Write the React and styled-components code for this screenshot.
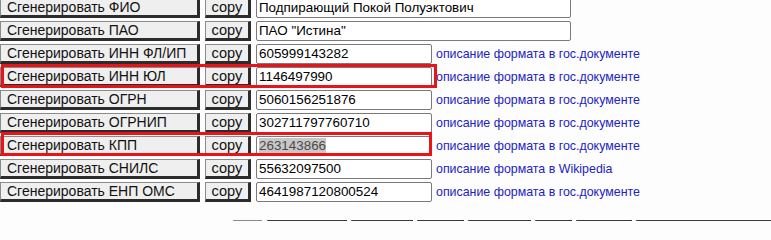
import React from 'react';
import styled, { createGlobalStyle } from 'styled-components';

const GlobalStyle = createGlobalStyle`
	html, body {
		margin: 0;
		overflow: hidden;
		background: #fdfdfd;
	}
	body {
		font-family: "Liberation Sans", Arial, sans-serif;
		font-size: 13.33px;
		color: #000;
	}
`;

const Page = styled.div`
	width: 771px;
	height: 221px;
	overflow: hidden;
`;

const Table = styled.div`
	display: flex;
	flex-direction: column;
	gap: 3px;
	margin-top: -2px;
`;

const Row = styled.div`
	position: relative;
	display: flex;
	align-items: center;
	height: 20px;
`;

const RawButton = styled.button`
	box-sizing: border-box;
	height: 20px;
	margin: 0;
	font-family: "Liberation Sans", Arial, sans-serif;
	font-size: 14px;
	color: #111;
	background: #efefef;
	border-style: solid;
	border-width: 1px 3px 3px 1px;
	border-color: #8a8a8a #2c2c2c #2c2c2c #8a8a8a;
	line-height: 15px;
	white-space: nowrap;
	overflow: hidden;
`;

const GenButton = styled(RawButton)`
	width: 200px;
	padding: 0 0 0 6px;
	text-align: left;
`;

const CopyButton = styled(RawButton)`
	width: 46px;
	margin-left: 5px;
	padding: 0;
	text-align: center;
	font-size: 14.6px;
`;

const Field = styled.div`
	box-sizing: border-box;
	width: ${p => p.$wide ? '315px' : '176px'};
	height: 20px;
	margin-left: 5px;
	padding: 0 2px;
	background: #fff;
	border: 1px solid #7a7a7a;
	border-radius: 2px;
	font-size: 13.4px;
	line-height: 18px;
	white-space: nowrap;
	overflow: hidden;
`;

const Selected = styled.span`
	background: #c8c8c8;
	color: #4a4a4a;
`;

const DocLink = styled.a`
	margin-left: 4px;
	color: #2222c4;
	font-size: 12.4px;
	text-decoration: none;
	white-space: nowrap;
`;

const Marker = styled.div`
	position: absolute;
	left: 1px;
	top: ${p => p.$top}px;
	width: ${p => p.$width}px;
	height: 24px;
	box-sizing: border-box;
	border: 3px solid #e8141a;
	pointer-events: none;
`;

const Footer = styled.div`
	display: flex;
	gap: 4px;
	margin: 18px 0 0 232px;
`;

const PageBox = styled.div`
	box-sizing: border-box;
	flex: none;
	width: 31px;
	height: 20px;
	background: #fff;
	border: 1px solid #8a8a8a;
	border-radius: 2px;
`;

const NavButton = styled(RawButton)`
	flex: none;
	width: ${p => p.$w}px;
	border-top-color: #3a3a3a;
`;

const GOV = 'описание формата в гос.документе';

const rows = [
	{ label: 'ФИО', value: 'Подпирающий Покой Полуэктович', wide: true },
	{ label: 'ПАО', value: 'ПАО "Истина"', wide: true },
	{ label: 'ИНН ФЛ/ИП', value: '605999143282', link: GOV },
	{ label: 'ИНН ЮЛ', value: '1146497990', link: GOV, mark: { top: -3, width: 436 } },
	{ label: 'ОГРН', value: '5060156251876', link: GOV },
	{ label: 'ОГРНИП', value: '302711797760710', link: GOV },
	{ label: 'КПП', value: '263143866', link: GOV, selected: true, mark: { top: -4, width: 431 } },
	{ label: 'СНИЛС', value: '55632097500', link: 'описание формата в Wikipedia' },
	{ label: 'ЕНП ОМС', value: '4641987120800524', link: GOV },
];

const navWidths = [80, 62, 47, 63, 37, 56, 140];

export default function App() {
	return (
		<Page>
			<GlobalStyle />
			<Table>
				{rows.map(row => (
					<Row key={row.label}>
						<GenButton>Сгенерировать {row.label}</GenButton>
						<CopyButton>copy</CopyButton>
						<Field $wide={row.wide}>
							{row.selected ? <Selected>{row.value}</Selected> : row.value}
						</Field>
						{row.link && <DocLink href="#">{row.link}</DocLink>}
						{row.mark && <Marker $top={row.mark.top} $width={row.mark.width} />}
					</Row>
				))}
			</Table>
			<Footer>
				<PageBox />
				{navWidths.map((w, i) => <NavButton key={i} $w={w} />)}
			</Footer>
		</Page>
	);
}
